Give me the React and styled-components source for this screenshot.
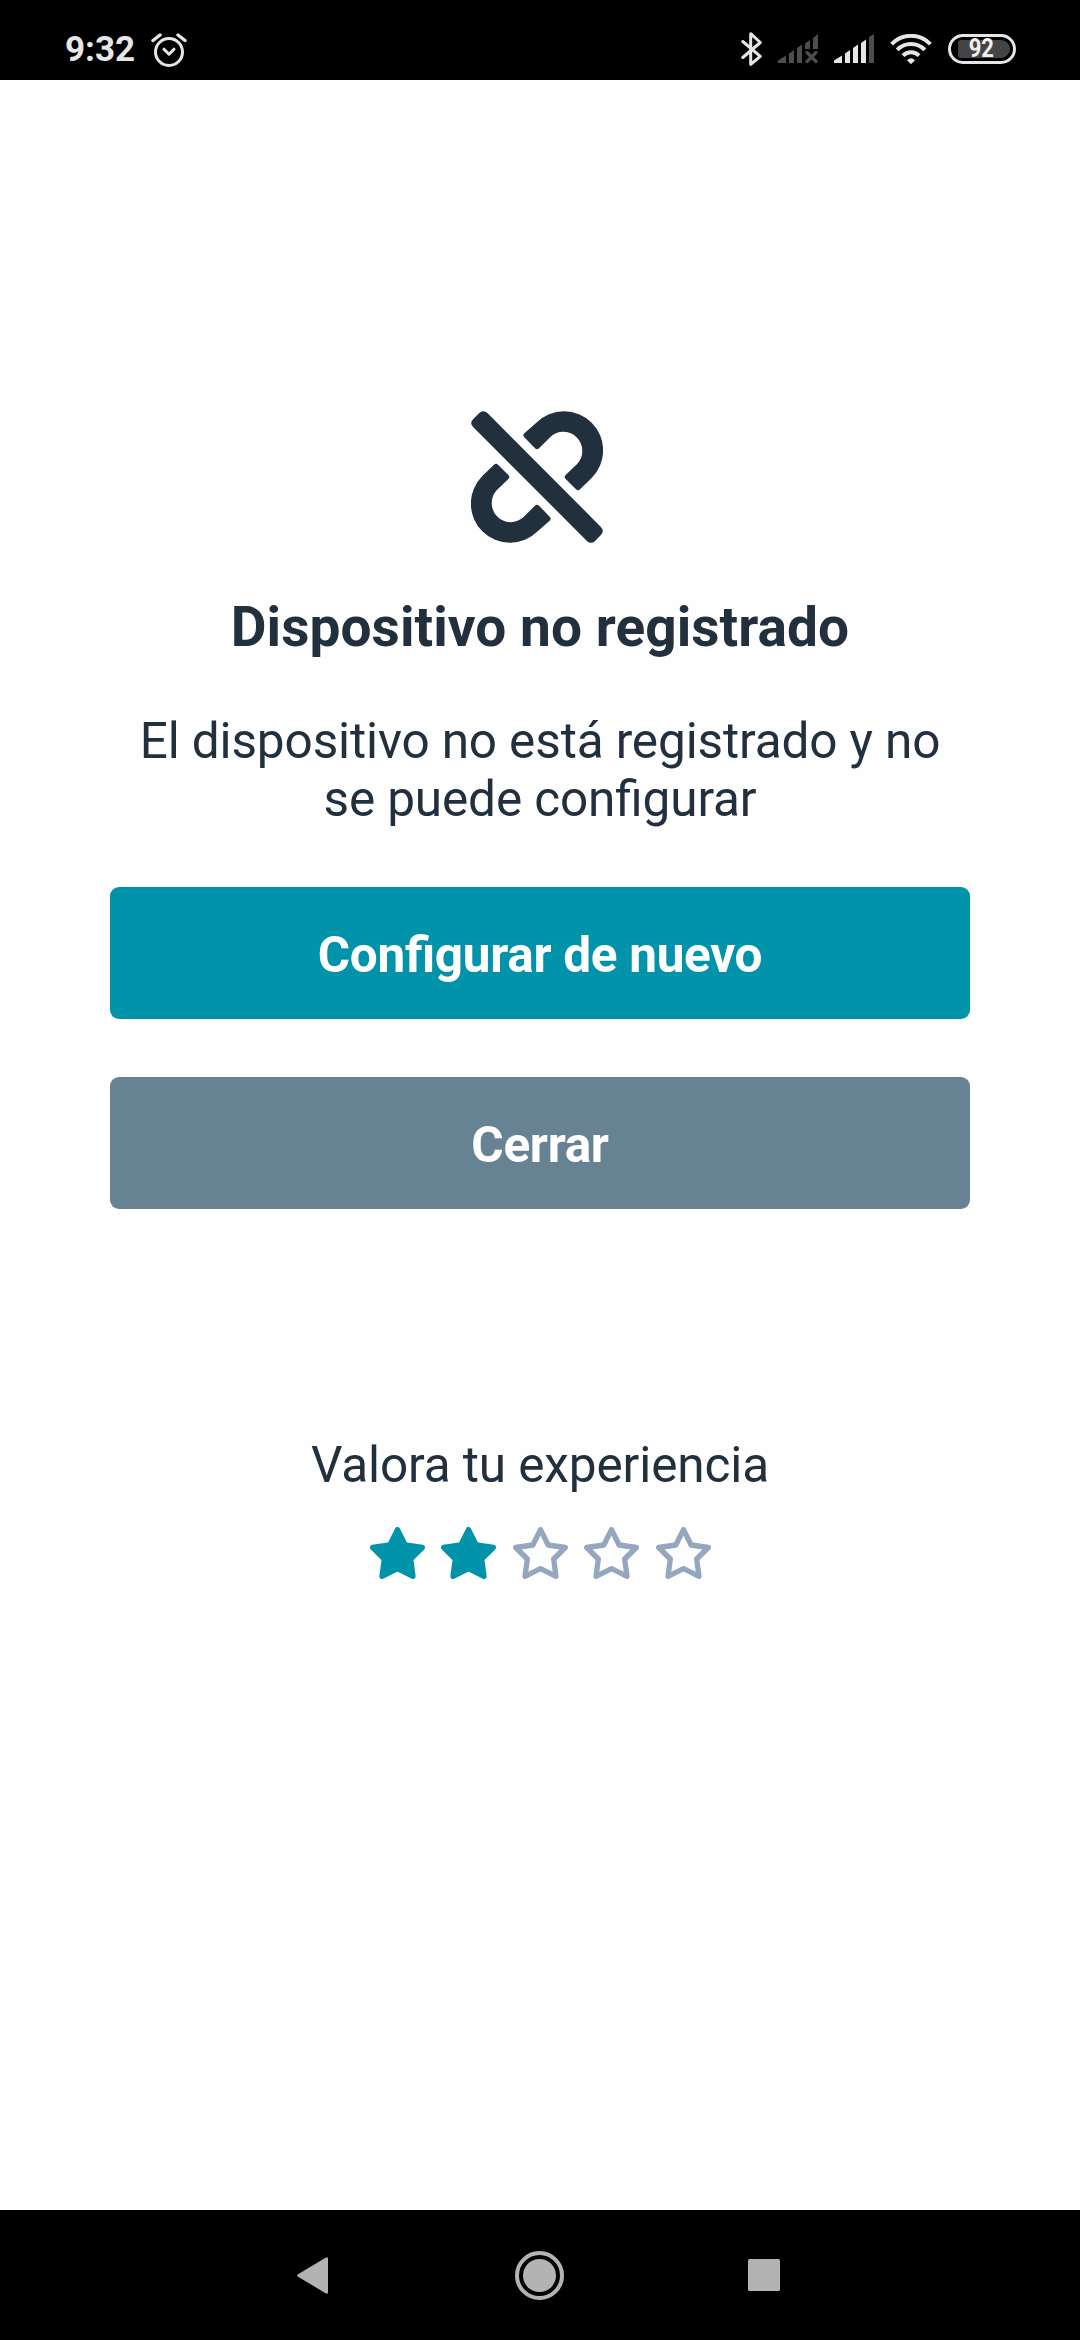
import React from 'react';
import styled, { createGlobalStyle } from 'styled-components'

const GlobalStyle = createGlobalStyle`
  * {
    box-sizing: border-box;
  }

  body {
    margin: 0;
    background-color: #fff;
    font-family: Roboto, sans-serif;
    font-feature-settings: "liga" 1;
  }

  svg {
    display: block;
    flex: none;
  }
`

const Screen = styled.div`
  display: flex;
  flex-direction: column;
  width: 1080px;
  height: 2340px;
  background-color: #fefefe;
`

const StatusBar = styled.header`
  display: flex;
  justify-content: space-between;
  height: 80px;
  padding: 20px 64px 0 65px;
  background-color: #000;
`

const StatusGroup = styled.div`
  display: flex;
  align-items: center;
  height: ${({ $height }) => $height}px;
`

const Clock = styled.span`
  width: 86px;
  font-size: 35px;
  font-weight: 700;
  line-height: 60px;
  color: #e6e6e6;
  white-space: nowrap;
`

const StatusIcon = styled.svg`
  margin-left: 16px;
`

const Battery = styled.div`
  display: flex;
  width: 68px;
  height: 30px;
  margin-left: 16px;
  padding: 3px;
  border: 3px solid #e6e6e6;
  border-radius: 15px;
`

const BatteryLevel = styled.div`
  display: flex;
  align-items: center;
  justify-content: center;
  width: 52px;
  margin-left: 4px;
  padding-right: 5px;
  background-color: #444;
  border-radius: 3px 9px 9px 3px;
`

const BatteryText = styled.span`
  font-size: 25px;
  font-weight: 700;
  line-height: 18px;
  color: #f0f0f0;
  transform: scaleX(0.88);
`

const Content = styled.main`
  flex: 1;
  display: flex;
  flex-direction: column;
  align-items: center;
  padding: 331px 110px 0;
  color: #22303e;
  text-align: center;
`

const UnlinkSvg = styled.svg`
  margin-right: 6px;
`

const Title = styled.h1`
  margin: 52px 0 0;
  font-size: 55px;
  font-weight: 700;
  letter-spacing: 0.05px;
  line-height: 64px;
  white-space: nowrap;
`

const Text = styled.p`
  margin: 53px 0 0;
  font-size: 49.5px;
  font-weight: 400;
  letter-spacing: -0.13px;
  line-height: 58px;
  white-space: nowrap;
`

const Button = styled.button`
  display: flex;
  align-items: center;
  justify-content: center;
  width: 860px;
  height: 132px;
  margin: ${({ $gap }) => $gap}px 0 0;
  padding: 4px 0 0;
  border: 0;
  border-radius: 9px;
  background-color: ${({ $color }) => $color};
  color: #fff;
  font-family: inherit;
  font-feature-settings: inherit;
  font-size: 49.5px;
  font-weight: 700;
  letter-spacing: -0.3px;
`

const RatingLabel = styled.div`
  margin-top: 227px;
  font-size: 49.5px;
  letter-spacing: -0.11px;
  line-height: 58px;
`

const Stars = styled.div`
  display: flex;
  gap: 16.5px;
  margin-top: 33px;
`

const NavBar = styled.nav`
  display: flex;
  align-items: center;
  height: 130px;
  padding: 1px 0 0 297px;
  background-color: #000;
`

const HomeIcon = styled.svg`
  margin: 0 184px 0 187px;
`

const RecentsIcon = styled.svg`
  margin-bottom: 1px;
`

function AlarmIcon() {
  return (
    <svg width="36" height="36" viewBox="0 0 36 36" fill="none" stroke="#e6e6e6" strokeWidth="3" strokeLinecap="round">
      <circle cx="18" cy="20" r="13.5" />
      <path d="M13 17.2l5 5 5-5" strokeLinejoin="round" />
      <path d="M2 8.500L9 3M27 3L34 8.500" strokeWidth="3.400" />
    </svg>
  )
}

function BluetoothIcon() {
  return (
    <svg width="22" height="36" viewBox="0 0 22 36" fill="none" stroke="#e6e6e6" strokeWidth="3" strokeLinecap="round" strokeLinejoin="round">
      <path d="M2.800 10.500L20.300 25.400L10.700 33.300V2.700L20.300 11.500L2.800 26.500" />
    </svg>
  )
}

function SignalIcon({ color, lastColor, off }) {
  return (
    <StatusIcon width="40" height="30" viewBox="0 0 40 30" fill={color}>
      <path d="M0 29v-2.500l8-5V29z" />
      <path d="M11 29V19.500l5-3.500V29z" />
      <path d="M19 29V14l5-3.500V29z" />
      {off ? (
        <>
          <path d="M27 15V9.500L32 6v9zM35 15V4L40 0v15z" />
          <path d="M29 18.500l9 9M38 18.500l-9 9" stroke={color} strokeWidth="3.2" strokeLinecap="round" />
        </>
      ) : (
        <>
          <path d="M27 29V9l5-3.500V29z" />
          <path d="M35 29V3L40 0v29z" fill={lastColor} />
        </>
      )}
    </StatusIcon>
  )
}

function WifiIcon() {
  return (
    <StatusIcon width="42" height="30" viewBox="0 0 42 30" fill="none" stroke="#e6e6e6" strokeWidth="3.9">
      <path d="M1.600 10.200A26.500 26.500 0 0 1 40.400 10.200" />
      <path d="M7.200 15.900A19 19 0 0 1 34.800 15.900" />
      <path d="M13 21.700A11 11 0 0 1 29 21.700" />
      <path d="M21 30.200l-4-4q4-4 8 0z" fill="#e6e6e6" stroke="none" />
    </StatusIcon>
  )
}

function UnlinkIcon() {
  const half = 'M160 67Q154 73 160 79L192 112Q198 118 204 112L239 77A57 57 0 0 1 319 158L284 192Q278 198 284 204L315 235Q321 241 327 235L362 201A117 117 0 0 0 196 35Z'
  return (
    <UnlinkSvg width="132" height="132" viewBox="0 0 396 396" fill="#22303e">
      <path d="M7 49Q-6 36 7 24L24 7Q37-6 50 7L389 347Q402 360 389 373L373 389Q360 402 347 389Z" />
      <path d={half} />
      <path d={half} transform="rotate(180 198 198)" />
    </UnlinkSvg>
  )
}

function StarIcon({ filled }) {
  const color = filled ? '#0093a9' : '#94a7be'
  return (
    <svg width="55" height="52" viewBox="0 0 165 156">
      <path
        d="M82.500 8L105.500 54L157 61.500L122 96L129 148L82.500 125L36 148L43 96L8 61.500L59.500 54Z"
        fill={filled ? color : 'none'}
        stroke={color}
        strokeWidth="16"
        strokeLinejoin="round"
      />
    </svg>
  )
}

export default function App() {
  const rating = 2

  return (
    <Screen>
      <GlobalStyle />
      <StatusBar>
        <StatusGroup $height={60}>
          <Clock>9:32</Clock>
          <AlarmIcon />
        </StatusGroup>
        <StatusGroup $height={58}>
          <BluetoothIcon />
          <SignalIcon color="#4d4d4d" off />
          <SignalIcon color="#e6e6e6" lastColor="#4d4d4d" />
          <WifiIcon />
          <Battery>
            <BatteryLevel>
              <BatteryText>92</BatteryText>
            </BatteryLevel>
          </Battery>
        </StatusGroup>
      </StatusBar>
      <Content>
        <UnlinkIcon />
        <Title>Dispositivo no registrado</Title>
        <Text>
          El dispositivo no está registrado y no<br />
          se puede configurar
        </Text>
        <Button $color="#0093a9" $gap={59}>Configurar de nuevo</Button>
        <Button $color="#678393" $gap={58}>Cerrar</Button>
        <RatingLabel>Valora tu experiencia</RatingLabel>
        <Stars>
          {[1, 2, 3, 4, 5].map((value) => (
            <StarIcon key={value} filled={value <= rating} />
          ))}
        </Stars>
      </Content>
      <NavBar>
        <svg width="31" height="37" viewBox="0 0 31 37" fill="#b3b3b3">
          <path d="M29 .6Q31-.3 31 2V35Q31 37.300 29 36.400L1 19.700Q-.6 18.500 1 17.300Z" />
        </svg>
        <HomeIcon width="49" height="49" viewBox="0 0 49 49">
          <circle cx="24.5" cy="24.5" r="22.5" fill="none" stroke="#b3b3b3" strokeWidth="4" />
          <circle cx="24.5" cy="24.5" r="16.5" fill="#b3b3b3" />
        </HomeIcon>
        <RecentsIcon width="32" height="32" viewBox="0 0 32 32">
          <rect width="32" height="32" rx="1.5" fill="#b3b3b3" />
        </RecentsIcon>
      </NavBar>
    </Screen>
  )
}
